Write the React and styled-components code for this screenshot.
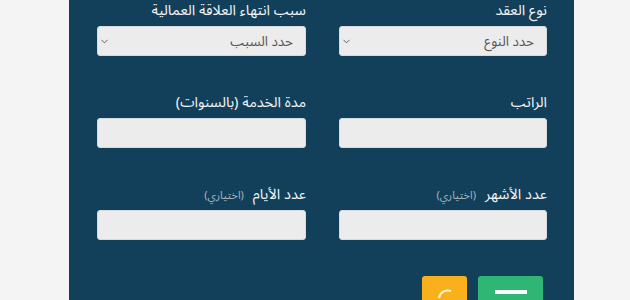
import styled, { createGlobalStyle } from "styled-components";
import { ChevronDown } from "lucide-react";

const GlobalStyle = createGlobalStyle`
	body {
		margin: 0;
		background-color: #f4f4f4;
		font-family: "Noto Sans Arabic", "DejaVu Sans", sans-serif;
	}
`;

const fields = [
	{ label: "نوع العقد", type: "select", placeholder: "حدد النوع" },
	{ label: "سبب انتهاء العلاقة العمالية", type: "select", placeholder: "حدد السبب" },
	{ label: "الراتب" },
	{ label: "مدة الخدمة (بالسنوات)" },
	{ label: "عدد الأشهر", optional: true },
	{ label: "عدد الأيام", optional: true },
];

function App() {
	return (
		<>
			<GlobalStyle />
			<Page>
				<Panel dir="rtl">
					<Grid>
						{fields.map((field) => (
							<Field key={field.label}>
								<Label>
									{field.label}
									{field.optional && <Optional>(اختياري)</Optional>}
								</Label>
								{field.type === "select" ? (
									<SelectWrap>
										<Select defaultValue="">
											<option value="">{field.placeholder}</option>
										</Select>
										<Arrow>
											<ChevronDown size={11} strokeWidth={2} />
										</Arrow>
									</SelectWrap>
								) : (
									<Input type="text" />
								)}
							</Field>
						))}
					</Grid>
					<Actions>
						<ActionButton $color="#2fb574" $width={65}>
							<svg width="32" height="20" viewBox="0 0 32 20">
								<rect x="0" y="14" width="32" height="4" fill="#fff" />
							</svg>
						</ActionButton>
						<ActionButton $color="#f8b11c" $width={45}>
							<svg width="20" height="24" viewBox="0 0 20 24">
								<path
									d="M16 15 A 9 9 0 0 0 4 22"
									fill="none"
									stroke="#fff6d8"
									strokeWidth="2"
								/>
							</svg>
						</ActionButton>
					</Actions>
				</Panel>
			</Page>
		</>
	);
}

export default App;

const Page = styled.div`
	height: 300px;
	overflow: hidden;
`;

const Panel = styled.div`
	margin-left: 69px;
	width: 505px;
	height: 300px;
	background-color: #12405a;
	box-sizing: border-box;
	padding: 2px 27px 0 28px;
`;

const Grid = styled.div`
	display: grid;
	grid-template-columns: 208px 209px;
	column-gap: 33px;
	row-gap: 38px;
`;

const Field = styled.div`
	display: flex;
	flex-direction: column;
`;

const Label = styled.label`
	display: flex;
	align-items: baseline;
	height: 18px;
	line-height: 18px;
	margin-bottom: 6px;
	color: #f2f4f6;
	font-size: 14.5px;
	white-space: nowrap;
`;

const Optional = styled.span`
	margin-right: 9px;
	color: #aab4bd;
	font-size: 11px;
`;

const SelectWrap = styled.div`
	position: relative;
	height: 30px;
`;

const Select = styled.select`
	display: block;
	appearance: none;
	width: 100%;
	height: 30px;
	box-sizing: border-box;
	padding: 0 12px 0 24px;
	border: 1px solid #d6dbe0;
	border-radius: 3px;
	background-color: #ececec;
	color: #555;
	font-family: inherit;
	font-size: 13.5px;
	outline: none;
`;

const Arrow = styled.span`
	position: absolute;
	left: 2px;
	top: 10px;
	display: flex;
	color: #555;
	pointer-events: none;
`;

const Input = styled.input`
	display: block;
	height: 30px;
	box-sizing: border-box;
	border: 1px solid #d6dbe0;
	border-radius: 3px;
	background-color: #ececec;
	outline: none;
`;

const Actions = styled.div`
	display: flex;
	gap: 11px;
	margin-top: 36px;
	padding-right: 4px;
`;

const ActionButton = styled.button`
	display: flex;
	align-items: flex-start;
	justify-content: center;
	width: ${(p) => p.$width}px;
	height: 40px;
	padding: 0;
	border: none;
	border-radius: 3px;
	background-color: ${(p) => p.$color};
	cursor: pointer;
`;
